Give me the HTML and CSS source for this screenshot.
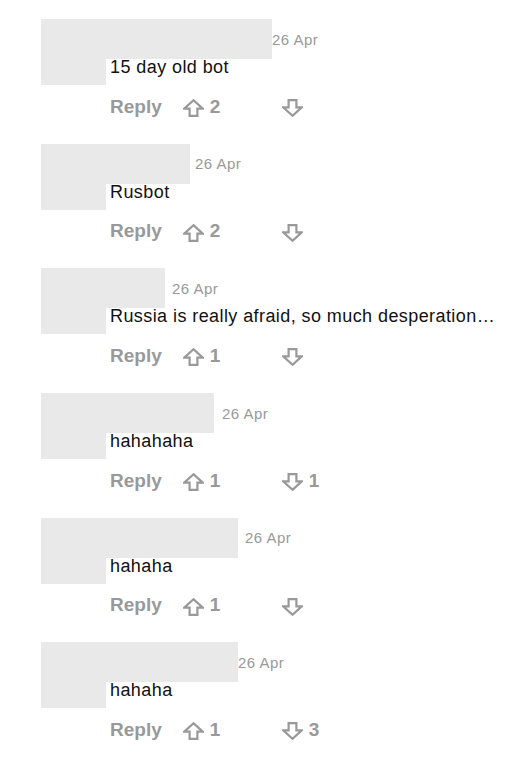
FILE: index.html
```html
<!DOCTYPE html>
<html lang="en">
<head>
    <meta charset="UTF-8">
    <meta name="viewport" content="width=device-width, initial-scale=1.0">
    <title>Comments</title>
    <link rel="stylesheet" href="styles.css">
</head>
<body>
    <div class="comments">

        <div class="comment">
            <div class="mask mask-avatar"></div>
            <div class="mask mask-name" style="width:231px"></div>
            <div class="comment-body">
                <div class="comment-meta"><span class="author" style="width:162px"></span><span class="date">26 Apr</span></div>
                <p class="comment-text">15 day old bot</p>
                <div class="actions">
                    <span class="reply">Reply</span>
                    <span class="vote"><svg class="arrow" viewBox="0 0 21 18"><path d="M10.5 1.2 L1.3 9.6 H6.6 V16.8 H14.4 V9.6 H19.7 Z"/></svg>2</span>
                    <span class="vote"><svg class="arrow" viewBox="0 0 21 18"><path d="M10.5 16.8 L1.3 8.4 H6.6 V1.2 H14.4 V8.4 H19.7 Z"/></svg></span>
                </div>
            </div>
        </div>

        <div class="comment">
            <div class="mask mask-avatar"></div>
            <div class="mask mask-name" style="width:149px"></div>
            <div class="comment-body">
                <div class="comment-meta"><span class="author" style="width:85px"></span><span class="date">26 Apr</span></div>
                <p class="comment-text">Rusbot</p>
                <div class="actions">
                    <span class="reply">Reply</span>
                    <span class="vote"><svg class="arrow" viewBox="0 0 21 18"><path d="M10.5 1.2 L1.3 9.6 H6.6 V16.8 H14.4 V9.6 H19.7 Z"/></svg>2</span>
                    <span class="vote"><svg class="arrow" viewBox="0 0 21 18"><path d="M10.5 16.8 L1.3 8.4 H6.6 V1.2 H14.4 V8.4 H19.7 Z"/></svg></span>
                </div>
            </div>
        </div>

        <div class="comment">
            <div class="mask mask-avatar"></div>
            <div class="mask mask-name" style="width:124px"></div>
            <div class="comment-body">
                <div class="comment-meta"><span class="author" style="width:62px"></span><span class="date">26 Apr</span></div>
                <p class="comment-text">Russia is really afraid, so much desperation…</p>
                <div class="actions">
                    <span class="reply">Reply</span>
                    <span class="vote"><svg class="arrow" viewBox="0 0 21 18"><path d="M10.5 1.2 L1.3 9.6 H6.6 V16.8 H14.4 V9.6 H19.7 Z"/></svg>1</span>
                    <span class="vote"><svg class="arrow" viewBox="0 0 21 18"><path d="M10.5 16.8 L1.3 8.4 H6.6 V1.2 H14.4 V8.4 H19.7 Z"/></svg></span>
                </div>
            </div>
        </div>

        <div class="comment">
            <div class="mask mask-avatar"></div>
            <div class="mask mask-name" style="width:173px"></div>
            <div class="comment-body">
                <div class="comment-meta"><span class="author" style="width:112px"></span><span class="date">26 Apr</span></div>
                <p class="comment-text">hahahaha</p>
                <div class="actions">
                    <span class="reply">Reply</span>
                    <span class="vote"><svg class="arrow" viewBox="0 0 21 18"><path d="M10.5 1.2 L1.3 9.6 H6.6 V16.8 H14.4 V9.6 H19.7 Z"/></svg>1</span>
                    <span class="vote"><svg class="arrow" viewBox="0 0 21 18"><path d="M10.5 16.8 L1.3 8.4 H6.6 V1.2 H14.4 V8.4 H19.7 Z"/></svg>1</span>
                </div>
            </div>
        </div>

        <div class="comment">
            <div class="mask mask-avatar"></div>
            <div class="mask mask-name" style="width:197px"></div>
            <div class="comment-body">
                <div class="comment-meta"><span class="author" style="width:135px"></span><span class="date">26 Apr</span></div>
                <p class="comment-text">hahaha</p>
                <div class="actions">
                    <span class="reply">Reply</span>
                    <span class="vote"><svg class="arrow" viewBox="0 0 21 18"><path d="M10.5 1.2 L1.3 9.6 H6.6 V16.8 H14.4 V9.6 H19.7 Z"/></svg>1</span>
                    <span class="vote"><svg class="arrow" viewBox="0 0 21 18"><path d="M10.5 16.8 L1.3 8.4 H6.6 V1.2 H14.4 V8.4 H19.7 Z"/></svg></span>
                </div>
            </div>
        </div>

        <div class="comment">
            <div class="mask mask-avatar"></div>
            <div class="mask mask-name" style="width:197px"></div>
            <div class="comment-body">
                <div class="comment-meta"><span class="author" style="width:128px"></span><span class="date">26 Apr</span></div>
                <p class="comment-text">hahaha</p>
                <div class="actions">
                    <span class="reply">Reply</span>
                    <span class="vote"><svg class="arrow" viewBox="0 0 21 18"><path d="M10.5 1.2 L1.3 9.6 H6.6 V16.8 H14.4 V9.6 H19.7 Z"/></svg>1</span>
                    <span class="vote"><svg class="arrow" viewBox="0 0 21 18"><path d="M10.5 16.8 L1.3 8.4 H6.6 V1.2 H14.4 V8.4 H19.7 Z"/></svg>3</span>
                </div>
            </div>
        </div>

    </div>
</body>
</html>
```

FILE: styles.css
```css
body {
    font-family: "Liberation Sans", Arial, sans-serif;
    background-color: #fff;
    margin: 8px;
    color: #111;
}

.comments {
    display: flex;
    flex-direction: column;
    padding-top: 11px;
}

.comment {
    position: relative;
    display: flex;
    padding: 10.5px 0 25.1px 102px;
}

/* grey blocks laid over the avatar and the user name */
.mask {
    position: absolute;
    top: 0;
    left: 33px;
    background: #e9e9e9;
}

.mask-avatar {
    width: 65px;
    height: 66px;
}

.mask-name {
    height: 40px;
}

.comment-body {
    display: flex;
    flex-direction: column;
}

.comment-meta {
    display: flex;
    font-size: 15px;
    letter-spacing: 0.5px;
    line-height: 20px;
    color: #999;
}

.author {
    display: inline-block;
}

.comment-text {
    margin: 5.4px 0 0;
    font-size: 18px;
    letter-spacing: 0.42px;
    line-height: 24px;
    color: #111;
}

.actions {
    display: flex;
    align-items: center;
    margin-top: 15.7px;
    font-size: 19px;
    line-height: 24px;
    font-weight: bold;
    color: #999;
}

.reply {
    margin-right: 21px;
}

.vote {
    display: flex;
    align-items: center;
    gap: 6px;
    width: 99px;
}

.arrow {
    width: 21px;
    height: 18px;
    margin-top: 3px;
    fill: none;
    stroke: #999;
    stroke-width: 2.2;
}
```
